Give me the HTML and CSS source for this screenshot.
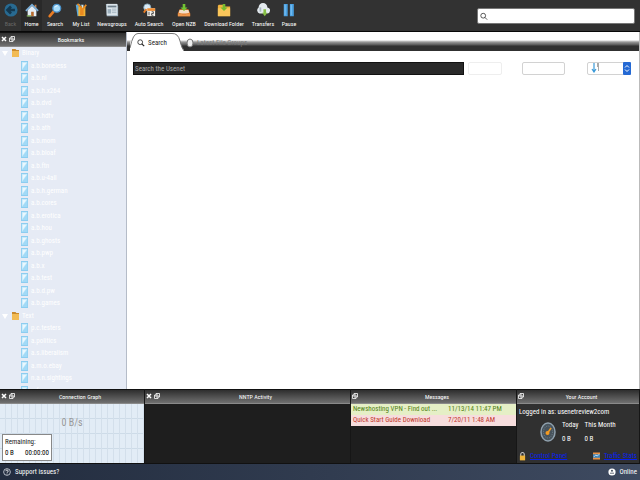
FILE: index.html
```html
<!DOCTYPE html>
<html lang="en">
<head>
<meta charset="utf-8">
<title>Usenet client</title>
<link rel="stylesheet" href="styles.css">
</head>
<body>
<header class="toolbar">
  <nav class="tools">
    <button class="tool dim"><svg viewBox="0 0 16 16"><circle cx="8" cy="8" r="7.5" fill="#286a91"/><path d="M12.500 8H5M8 4L4 8l4 4" stroke="#14384f" stroke-width="3" fill="none"/></svg>Back</button>
    <button class="tool current"><svg viewBox="0 0 16 16"><path d="M3 8v7h10V8L8 3z" fill="#e4edf5"/><path d="M11 2h2v4h-2z" fill="#c4804d"/><path d="M1 9l7-7 7 7" fill="none" stroke="#78acd6" stroke-width="2"/><path d="M7 10h3v5H7z" fill="#b66a2e"/><path d="M2 14h5v1.500H2z" fill="#78a950"/></svg>Home</button>
    <button class="tool"><svg viewBox="0 0 16 16"><path d="M7 9l-5 6" stroke="#e87c24" stroke-width="3" stroke-linecap="round"/><circle cx="10" cy="6" r="4.500" fill="#a7dcfb" stroke="#4b91c8" stroke-width="1.500"/><path d="M8 5q1-2 3-2" stroke="#fff" fill="none"/></svg>Search</button>
    <button class="tool"><svg viewBox="0 0 16 16"><path d="M2 2l5-1 2 13-5 1z" fill="#5aa9dc"/><path d="M5 4h8v11H5z" fill="#f0b338"/><path d="M4 1l4 4v9M14 2l-4 5v7" stroke="#e98a21" stroke-width="2" fill="none"/><path d="M8 2h3l-1 4z" fill="#c9e7f6"/></svg>My List</button>
    <button class="tool"><svg viewBox="0 0 16 16"><path d="M1 1h13l1 3v11H2z" fill="#9eb1bf"/><path d="M2 1h12v13H2z" fill="#dce5eb"/><path d="M3 4h10" stroke="#6d7d89" stroke-width="2"/><path d="M3 7h4v5H3z" fill="#9cafbc"/><path d="M8 7h5M8 9h5M8 11h5" stroke="#a2b3bf"/></svg>Newsgroups</button>
    <button class="tool"><svg viewBox="0 0 16 16"><circle cx="6" cy="5" r="4" fill="#d9eaf5" stroke="#87a9bd"/><path d="M5 7l-3 4" stroke="#e87c24" stroke-width="2"/><path d="M6 6h9v9H6z" fill="#f6f3ed"/><path d="M6 6h9v3H6z" fill="#ef8c32"/><path d="M8 10v4M11 10h2v2h-2v2h2" fill="none" stroke="#454545"/></svg>Auto Search</button>
    <button class="tool"><svg viewBox="0 0 16 16"><path d="M3 7h10l2 5v3H1v-3z" fill="#e17b2d"/><path d="M3 8h10l1 3-3 1H5l-3-1z" fill="#f3dfc8"/><path d="M1 12h4l1 1h4l1-1h4v3H1z" fill="#ea964d"/><path d="M6.500 1h3v4H12L8 9 4 5h2.500z" fill="#72c332"/></svg>Open NZB</button>
    <button class="tool"><svg viewBox="0 0 16 16"><path d="M2 2h5l1 2h7v11H1V3z" fill="#f2b33f"/><path d="M1 6h14v9H1z" fill="#fac65b"/><path d="M6.500 1h3v4H12L8 9 4 5h2.500z" fill="#76bc2f"/></svg>Download Folder</button>
    <button class="tool"><svg viewBox="0 0 16 16"><path d="M4 12a4 4 0 0 1-1-7 5 5 0 0 1 10 0 3.500 3.500 0 0 1-1 7z" fill="#e4eaef"/><path d="M5 10V5" stroke="#a8b7c1" stroke-width="2"/><path d="M8.500 7h3v4H13l-3 4-3-4h1.500z" fill="#86be46"/></svg>Transfers</button>
    <button class="tool"><svg viewBox="0 0 16 16"><path d="M2 1h4.500v14H2zM9 1h4.500v14H9z" fill="#4aa1e2"/><path d="M3 2h1v12H3zM10 2h1v12h-1z" fill="#86c8f5"/></svg>Pause</button>
  </nav>
  <label class="find"><svg viewBox="0 0 10 10"><circle cx="4" cy="4" r="3" fill="none" stroke="#333"/><path d="M6 6l3 3" stroke="#333"/></svg><input type="search" aria-label="Find"></label>
</header>

<div class="workspace">
  <aside class="sidebar">
    <h2 class="bar"><span class="winbtns"><button class="wb" aria-label="Close"><svg viewBox="0 0 6 6"><path d="M1 1l4 4M5 1L1 5" stroke="#fff" stroke-width="1.500"/></svg></button><button class="wb" aria-label="Detach"><svg viewBox="0 0 6 6"><path d="M2 .5h3.500V4H2zM.5 2H4v3.500H.5z" fill="#444" stroke="#fff" stroke-width=".8"/></svg></button></span>Bookmarks</h2>
    <ul class="tree" id="tree"></ul>
  </aside>
  <main class="content">
    <nav class="tabs">
      <button class="tab active"><svg class="tabshape" viewBox="0 0 54 18" preserveAspectRatio="none"><path d="M0 18V10Q3 0 8 0H42Q48 0 50 8Q52 17 54 18z" fill="#fff"/><path d="M0 15Q3 0 8 0.500H42Q48 0 50 8Q52 16 54 17" fill="none" stroke="#777"/></svg><svg class="glass" viewBox="0 0 10 10"><circle cx="4" cy="4" r="3" fill="none" stroke="#222"/><path d="M6 6l3 3" stroke="#222" stroke-width="1.500"/></svg><span>Search</span></button>
      <button class="tab"><svg class="glass" viewBox="0 0 8 10"><ellipse cx="4" cy="5" rx="3" ry="4" fill="#eee" stroke="#777"/></svg><span>Latest File Groups</span></button>
    </nav>
    <form class="query">
      <input class="term" type="text" placeholder="Search the Usenet" aria-label="Search the Usenet">
      <button class="blank faint" type="button" aria-label="Search"></button>
      <button class="blank wide" type="button" aria-label="Advanced"></button>
      <label class="sort"><select aria-label="Sort order"><option></option></select><svg class="order" viewBox="0 0 10 10"><path d="M3 0v8M1 6l2 3 2-3" fill="none" stroke="#3b9ad8" stroke-width="1.200"/><path d="M6 1h2M6 3h2M7 5h1M7 7h1" stroke="#555"/></svg><svg class="step" viewBox="0 0 8 12"><path d="M2 5l2-2 2 2M2 7l2 2 2-2" fill="none" stroke="#fff"/></svg></label>
    </form>
  </main>
</div>

<div class="panels">
  <section class="panel">
    <h2 class="bar"><span class="winbtns"><button class="wb" aria-label="Close"><svg viewBox="0 0 6 6"><path d="M1 1l4 4M5 1L1 5" stroke="#fff" stroke-width="1.500"/></svg></button><button class="wb" aria-label="Detach"><svg viewBox="0 0 6 6"><path d="M2 .5h3.500V4H2zM.5 2H4v3.500H.5z" fill="#444" stroke="#fff" stroke-width=".8"/></svg></button></span>Connection Graph</h2>
    <div class="graph"><div class="rate">0 B/s</div><div class="remain"><div>Remaining:</div><div class="pair"><span>0 B</span><span>00:00:00</span></div></div></div>
  </section>
  <section class="panel">
    <h2 class="bar"><span class="winbtns"><button class="wb" aria-label="Close"><svg viewBox="0 0 6 6"><path d="M1 1l4 4M5 1L1 5" stroke="#fff" stroke-width="1.500"/></svg></button><button class="wb" aria-label="Detach"><svg viewBox="0 0 6 6"><path d="M2 .5h3.500V4H2zM.5 2H4v3.500H.5z" fill="#444" stroke="#fff" stroke-width=".8"/></svg></button></span>NNTP Activity</h2>
  </section>
  <section class="panel">
    <h2 class="bar single"><span class="winbtns"><button class="wb" aria-label="Detach"><svg viewBox="0 0 6 6"><path d="M2 .5h3.500V4H2zM.5 2H4v3.500H.5z" fill="#444" stroke="#fff" stroke-width=".8"/></svg></button></span>Messages</h2>
    <table class="messages">
      <tr class="good"><td>Newshosting VPN - Find out ...</td><td>11/13/14 11:47 PM</td></tr>
      <tr class="bad"><td>Quick Start Guide Download</td><td>7/20/11 1:48 AM</td></tr>
    </table>
  </section>
  <section class="panel">
    <h2 class="bar single"><span class="winbtns"><button class="wb" aria-label="Detach"><svg viewBox="0 0 6 6"><path d="M2 .5h3.500V4H2zM.5 2H4v3.500H.5z" fill="#444" stroke="#fff" stroke-width=".8"/></svg></button></span>Your Account</h2>
    <div class="account">
      <div>Logged in as: usenetreview2com</div>
      <div class="usage">
        <svg class="gauge" viewBox="0 0 16 20" preserveAspectRatio="none"><ellipse cx="8" cy="10" rx="7" ry="9" fill="#47535c" stroke="#8fa0ad" stroke-width="1.500"/><ellipse cx="8" cy="10" rx="4.500" ry="6" fill="none" stroke="#70808c" stroke-dasharray="1 1"/><path d="M7 12l4-6" stroke="#f29a22" stroke-width="1.500"/><circle cx="7.500" cy="11" r="2" fill="#f29a22"/></svg>
        <div><div>Today</div><div>0 B</div></div>
        <div><div>This Month</div><div>0 B</div></div>
      </div>
      <div class="links">
        <a href="#control"><svg viewBox="0 0 8 10"><path d="M2 5V3a2 2 0 0 1 4 0v2" fill="none" stroke="#ccc" stroke-width="1.200"/><path d="M1 4.500h6V10H1z" fill="#efb43a"/></svg><span>Control Panel</span></a>
        <a href="#traffic"><svg viewBox="0 0 8 10"><path d="M0 1h8v8H0z" fill="#e99144"/><path d="M0 3h8v4H0z" fill="#3b84ba"/><path d="M1 6l2-2 2 1 2-2" fill="none" stroke="#dceefa"/></svg><span>Traffic Stats</span></a>
      </div>
    </div>
  </section>
</div>

<footer class="status">
  <a href="#support"><svg viewBox="0 0 10 10"><circle cx="5" cy="5" r="4.200" fill="none" stroke="#d5dbe2"/><path d="M3.500 4q0-1.500 1.500-1.500T6.500 4Q6.500 5 5 5.500V6M5 7v1" fill="none" stroke="#fff"/></svg>Support issues?</a>
  <span class="online"><svg viewBox="0 0 10 10"><circle cx="5" cy="5" r="4.500" fill="#fff"/><circle cx="5" cy="3.500" r="1.200" fill="#3c4859"/><path d="M2.500 6.500h5" stroke="#3c4859"/></svg>Online</span>
</footer>
<script src="tree.js"></script>
</body>
</html>
```
FILE: styles.css
```css
* { box-sizing: border-box; }
body {
  margin: 0;
  height: 100vh;
  display: flex;
  flex-direction: column;
  overflow: hidden;
  background: #fff;
  color: #fff;
  font: 7px/12px "Roboto Condensed", Roboto, "Liberation Sans", sans-serif;
}
button, input, select { font: inherit; color: inherit; border: 0; margin: 0; padding: 0; background: none; }
h2 { font: inherit; margin: 0; }
svg { display: block; flex: none; }

.toolbar {
  flex: none;
  height: 32px;
  display: flex;
  justify-content: space-between;
  background: #323232;
  border-bottom: 1px solid #080808;
}
.tools { display: grid; grid-template-columns: 21px 21px 26px 26px 36px 38px 32px 48px 30px 22px; }
.tool {
  display: flex;
  flex-direction: column;
  align-items: center;
  gap: 1px;
  padding-top: 2px;
  font-size: 6px;
  line-height: 10px;
  white-space: nowrap;
}
.tool svg { width: 14px; height: 16px; }
.tool.dim { color: #666; }
.tool.current { background: #292929; }
.find {
  width: 158px;
  height: 16px;
  margin: 8px 5px 0 0;
  padding: 0 2px;
  display: flex;
  align-items: center;
  background: #fff;
  border: 1px solid #777;
  border-radius: 2px;
}
.find svg { width: 8px; height: 9px; }
.find input { flex: 1; min-width: 0; color: #222; outline: 0; }

.workspace { flex: 1; min-height: 0; display: flex; }
.sidebar {
  width: 127px;
  flex: none;
  display: flex;
  flex-direction: column;
  background: #e6ebf5;
  border-right: 1px solid #b5bcc8;
}
.bar {
  flex: none;
  position: relative;
  height: 15px;
  display: flex;
  align-items: center;
  justify-content: center;
  padding-left: 16px;
  font-size: 6px;
  border-top: 1px solid #111;
  border-bottom: 1px solid #8a8a8a;
  background: linear-gradient(#2e2e2e, #707070);
}
.bar.single { padding-left: 7px; }
.winbtns { position: absolute; left: 1px; top: 3px; display: flex; gap: 2px; }
.wb svg { width: 6px; height: 6px; }
.tree { flex: 1; min-height: 0; margin: 0; padding: 0; list-style: none; overflow: hidden; }
.tree li { height: 12px; display: flex; align-items: center; gap: 3px; padding-left: 21px; }
.tree li:nth-child(even) { height: 13px; }
.tree li.group { padding-left: 2px; }
.tree svg { width: 7px; height: 10px; }
.tree .arrow { width: 6px; height: 8px; margin-right: 1px; }

.content { flex: 1; min-width: 0; border-right: 1px solid #bbb; }
.tabs {
  height: 19px;
  display: flex;
  padding-left: 3px;
  background: linear-gradient(#fff 0 8px, #999 10px, #555 13px, #303030 14px);
}
.tab {
  position: relative;
  display: flex;
  align-items: center;
  gap: 3px;
  padding: 3px 12px 0 2px;
  color: #777;
}
.tab.active { width: 54px; padding-left: 7px; color: #222; }
.tab svg.tabshape { position: absolute; left: 0; top: 1px; width: 100%; height: 18px; }
.tab span, .tab .glass { position: relative; }
.tab .glass { width: 8px; height: 10px; }
.query { display: flex; align-items: center; padding: 11px 8px 0 6px; }
.term { flex: 1; min-width: 0; height: 13px; padding: 0 1px; background: #292929; border: 1px solid #111; }
.term::placeholder { color: #aaa; opacity: 1; }
.blank { width: 34px; height: 13px; margin-left: 4px; border: 1px solid #d2d2d2; border-radius: 2px; }
.blank.faint { border-color: #eee; }
.blank.wide { width: 43px; margin-left: 20px; }
.sort { position: relative; width: 44px; height: 13px; margin-left: 22px; }
.sort select { display: block; appearance: none; width: 100%; height: 100%; background: #fff; border: 1px solid #d2d2d2; border-radius: 2px; }
.sort .order { position: absolute; left: 4px; top: 1px; width: 10px; height: 10px; pointer-events: none; }
.sort .step { position: absolute; right: 0; top: 0; width: 8px; height: 13px; background: #2469d4; border-radius: 1px; pointer-events: none; }

.panels {
  flex: none;
  height: 75px;
  display: grid;
  grid-template-columns: 145fr 206fr 166fr 123fr;
  border-bottom: 1px solid #111;
}
.panel { min-width: 0; display: flex; flex-direction: column; background: #1e1e1e; border-right: 1px solid #161616; }
.graph {
  flex: 1;
  display: flex;
  flex-direction: column;
  justify-content: space-between;
  background:
    repeating-linear-gradient(90deg, transparent 0 5px, #d3dfeb 5px 6px),
    repeating-linear-gradient(transparent 0 14px, #cddbe8 14px 15px), #e2ecf6;
}
.rate { padding-top: 13px; text-align: center; font-size: 10px; color: #999; }
.remain {
  width: 50px;
  margin: 0 0 2px 2px;
  padding: 2px 2px 1px;
  color: #222;
  background: #fff;
  border: 1px solid #888;
  line-height: 11px;
}
.pair { display: flex; justify-content: space-between; color: #000; }
.messages { width: 100%; border-collapse: collapse; line-height: 11px; white-space: nowrap; }
.messages td { padding: 0 2px; height: 11px; }
.messages td:first-child { width: 95px; }
.good { background: #e5efc6; color: #518214; }
.bad { background: #f6dddd; color: #c2372b; }
.account { flex: 1; display: flex; flex-direction: column; padding: 2px 2px 1px; background: #303030; white-space: nowrap; }
.usage { display: flex; align-items: center; gap: 6px; padding-left: 21px; line-height: 14px; }
.gauge { width: 16px; height: 20px; }
.links { margin-top: auto; display: flex; justify-content: space-between; }
.links a { display: flex; align-items: center; gap: 4px; color: #0720ee; }
.links svg { width: 7px; height: 10px; }

.status {
  flex: none;
  height: 16px;
  display: flex;
  align-items: center;
  justify-content: space-between;
  padding: 0 3px;
  background: linear-gradient(90deg, #232d3f, #3e4a60);
}
.status a, .online { display: flex; align-items: center; gap: 4px; color: #fff; text-decoration: none; }
.status svg { width: 8px; height: 10px; }
```
FILE: tree.js
```js
const groups = [
  ["Binary", ["a.b.boneless", "a.b.nl", "a.b.h.x264", "a.b.dvd", "a.b.hdtv", "a.b.ath", "a.b.mom", "a.b.bloaf", "a.b.ftn", "a.b.u-4all", "a.b.h.german", "a.b.cores", "a.b.erotica", "a.b.hou", "a.b.ghosts", "a.b.pwp", "a.b.x", "a.b.test", "a.b.d.pw", "a.b.games"]],
  ["Text", ["p.c.testers", "a.politics", "a.s.liberalism", "a.m.o.ebay", "n.a.n.sightings", "a.fan"]]
];
const arrow = '<svg class="arrow" viewBox="0 0 6 8"><path d="M0 2h6L3 7z" fill="#fff"/></svg>';
const folder = '<svg viewBox="0 0 8 10" preserveAspectRatio="none"><path d="M0 1h4l1 1h3v7H0z" fill="#c98a2e"/><path d="M0 3h8v6H0z" fill="#f2bb54"/></svg>';
const file = '<svg viewBox="0 0 8 10" preserveAspectRatio="none"><path d="M0 0h8v10H0z" fill="#8ccdf0"/><path d="M1 1h6v8H1z" fill="#c8eafb"/><path d="M1 9L7 2v7z" fill="#a2daf7"/><path d="M2 2h4L2 7z" fill="#eaf8fe"/></svg>';
document.getElementById("tree").innerHTML = groups.map(([name, items]) =>
  `<li class="group">${arrow}${folder}<span>${name}</span></li>` +
  items.map(item => `<li>${file}<span>${item}</span></li>`).join("")
).join("");
```
